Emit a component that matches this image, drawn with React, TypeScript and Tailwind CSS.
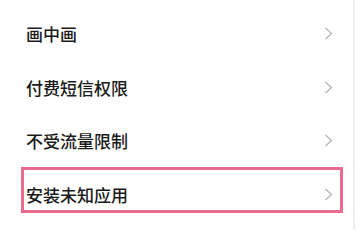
import React from "react";

const items = ["画中画", "付费短信权限", "不受流量限制", "安装未知应用"];

function Chevron() {
  return (
    <svg width="9" height="13" viewBox="0 0 9 13" className="shrink-0">
      <path d="M1.5 1 L7.5 6.5 L1.5 12" fill="none" stroke="#b3b3b3" strokeWidth="1.2" />
    </svg>
  );
}

export default function App() {
  return (
    <div
      className="relative w-[360px] h-[230px] bg-white overflow-hidden"
      style={{ fontFamily: '"Noto Sans CJK SC", "Noto Sans", sans-serif' }}
    >
      <div className="flex h-full">
        <div className="flex flex-col w-[353px] pt-[7px]">
          {items.map((t) => (
            <div key={t} className="flex items-center justify-between h-[53.5px] pl-[26px] pr-[20px]">
              <span className="text-[17px] leading-none font-medium text-[#1a1a1a]">{t}</span>
              <Chevron />
            </div>
          ))}
        </div>
        <div className="w-[2px] h-full bg-[#efefef]" />
      </div>
      <div className="absolute left-[21px] top-[167px] w-[322px] h-[46px] border-[3px] border-[#ea6b8f]" />
    </div>
  );
}
